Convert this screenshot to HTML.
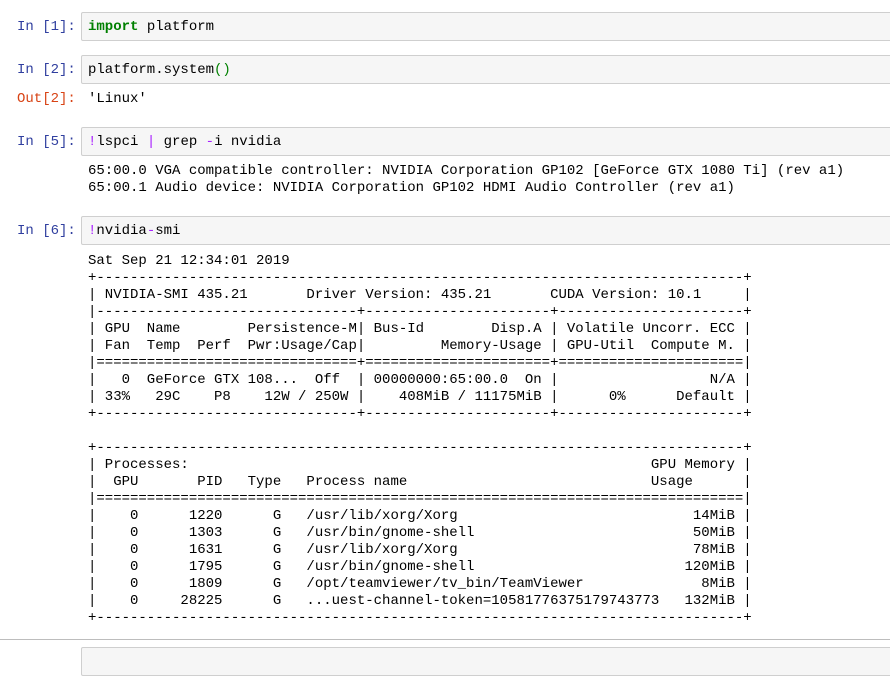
<!DOCTYPE html>
<html><head><meta charset="utf-8"><style>
body{margin:0;width:890px;height:654px;background:#fff;overflow:hidden;position:relative;font-family:"Liberation Mono",monospace;font-size:14px;color:#000}
.p{position:absolute;left:17px;color:#303f9f;line-height:17px;white-space:pre}
.o{color:#d84315}
.box{position:absolute;left:81px;width:820px;height:29px;background:#f6f6f6;border:1px solid #cfcfcf;border-radius:2px;box-sizing:border-box}
.box span.t{position:absolute;left:6px;top:6px;line-height:17px;white-space:pre}
pre{position:absolute;left:88px;margin:0;font-family:"Liberation Mono",monospace;font-size:14px;line-height:17px}
.k{color:#008000;font-weight:bold}.g{color:#008000}.m{color:#aa22ff}
.hr{position:absolute;left:0;top:639px;width:890px;height:1px;background:#bdbdbd}
</style></head><body>
<div class="p" style="top:19px">In [1]:</div>
<div class="box" style="top:12px"><span class="t"><span class="k">import</span> platform</span></div>
<div class="p" style="top:62px">In [2]:</div>
<div class="box" style="top:55px"><span class="t">platform.system<span class="g">()</span></span></div>
<div class="p o" style="top:91px">Out[2]:</div>
<pre style="top:91px">'Linux'</pre>
<div class="p" style="top:134px">In [5]:</div>
<div class="box" style="top:127px"><span class="t"><span class="m">!</span>lspci <span class="m">|</span> grep <span class="m">-</span>i nvidia</span></div>
<pre style="top:163px">65:00.0 VGA compatible controller: NVIDIA Corporation GP102 [GeForce GTX 1080 Ti] (rev a1)
65:00.1 Audio device: NVIDIA Corporation GP102 HDMI Audio Controller (rev a1)</pre>
<div class="p" style="top:223px">In [6]:</div>
<div class="box" style="top:216px"><span class="t"><span class="m">!</span>nvidia<span class="m">-</span>smi</span></div>
<pre style="top:253px">Sat Sep 21 12:34:01 2019       
+-----------------------------------------------------------------------------+
| NVIDIA-SMI 435.21       Driver Version: 435.21       CUDA Version: 10.1     |
|-------------------------------+----------------------+----------------------+
| GPU  Name        Persistence-M| Bus-Id        Disp.A | Volatile Uncorr. ECC |
| Fan  Temp  Perf  Pwr:Usage/Cap|         Memory-Usage | GPU-Util  Compute M. |
|===============================+======================+======================|
|   0  GeForce GTX 108...  Off  | 00000000:65:00.0  On |                  N/A |
| 33%   29C    P8    12W / 250W |    408MiB / 11175MiB |      0%      Default |
+-------------------------------+----------------------+----------------------+
                                                                               
+-----------------------------------------------------------------------------+
| Processes:                                                       GPU Memory |
|  GPU       PID   Type   Process name                             Usage      |
|=============================================================================|
|    0      1220      G   /usr/lib/xorg/Xorg                            14MiB |
|    0      1303      G   /usr/bin/gnome-shell                          50MiB |
|    0      1631      G   /usr/lib/xorg/Xorg                            78MiB |
|    0      1795      G   /usr/bin/gnome-shell                         120MiB |
|    0      1809      G   /opt/teamviewer/tv_bin/TeamViewer              8MiB |
|    0     28225      G   ...uest-channel-token=10581776375179743773   132MiB |
+-----------------------------------------------------------------------------+</pre>
<div class="hr"></div>
<div class="box" style="top:647px"></div>
</body></html>
